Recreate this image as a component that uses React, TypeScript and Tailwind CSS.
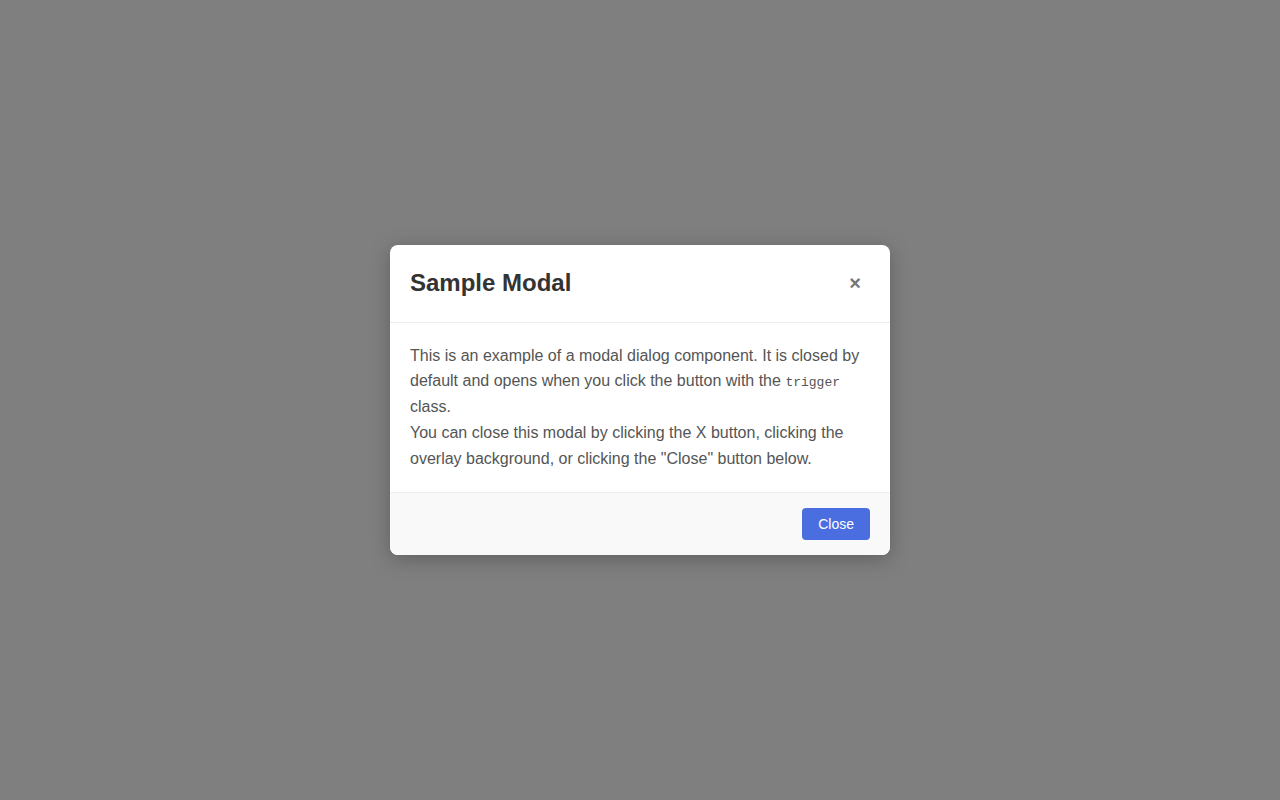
import React from "react";

export default function App() {
  return (
    <div className="w-[1280px] h-[800px] bg-[#7f7f7f] flex items-center justify-center" style={{ fontFamily: '"Liberation Sans", Arial, sans-serif' }}>
      <div className="w-[500px] bg-white rounded-[8px] shadow-[0_4px_20px_rgba(0,0,0,0.25)] overflow-hidden">
        <div className="flex items-center justify-between px-5 h-[78px] border-b border-[#eeeeee]">
          <h2 className="text-[24px] font-bold text-[#333333] leading-none">Sample Modal</h2>
          <button className="text-[20px] font-bold text-[#777777] leading-none pr-[9px]">×</button>
        </div>
        <div className="px-5 pt-5 pb-[21px] text-[16px] leading-[25.8px] text-[#555555]">
          <p>
            This is an example of a modal dialog component. It is closed by default and opens when you click the button with the{" "}
            <code className="text-[13px] leading-none" style={{ fontFamily: '"Liberation Mono", "Courier New", monospace' }}>trigger</code> class.
          </p>
          <p>You can close this modal by clicking the X button, clicking the overlay background, or clicking the "Close" button below.</p>
        </div>
        <div className="flex justify-end px-5 py-[15px] bg-[#f9f9f9] border-t border-[#eeeeee]">
          <button className="h-[32px] px-4 rounded-[4px] bg-[#4a6ee0] text-white text-[14px]">Close</button>
        </div>
      </div>
    </div>
  );
}
